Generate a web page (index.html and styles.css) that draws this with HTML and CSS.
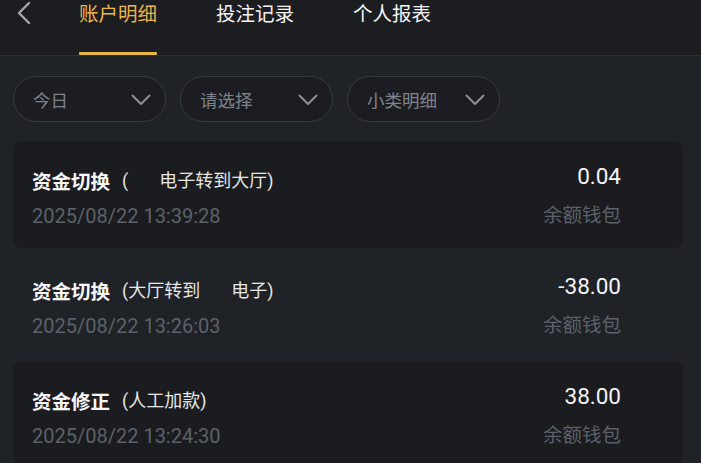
FILE: index.html
```html
<!DOCTYPE html>
<html lang="zh-CN">
<head>
<meta charset="utf-8">
<title>账户明细</title>
<link rel="stylesheet" href="styles.css">
</head>
<body>
<header class="topbar">
  <div class="back">
    <svg width="16" height="24" viewBox="0 0 16 24"><path d="M13 2 L3 12 L13 22" fill="none" stroke="#a3a6ab" stroke-width="2.4" stroke-linecap="round" stroke-linejoin="round"/></svg>
  </div>
  <nav class="tabs">
    <div class="tab active"><span class="tab-text">账户明细</span><span class="bar"></span></div>
    <div class="tab"><span class="tab-text">投注记录</span><span class="bar"></span></div>
    <div class="tab"><span class="tab-text">个人报表</span><span class="bar"></span></div>
  </nav>
</header>
<section class="filters">
  <div class="pill"><span>今日</span><svg width="20" height="12" viewBox="0 0 20 12"><path d="M1.5 1.5 L10 10 L18.5 1.5" fill="none" stroke="#8b9098" stroke-width="2" stroke-linecap="round" stroke-linejoin="round"/></svg></div>
  <div class="pill"><span>请选择</span><svg width="20" height="12" viewBox="0 0 20 12"><path d="M1.5 1.5 L10 10 L18.5 1.5" fill="none" stroke="#8b9098" stroke-width="2" stroke-linecap="round" stroke-linejoin="round"/></svg></div>
  <div class="pill"><span>小类明细</span><svg width="20" height="12" viewBox="0 0 20 12"><path d="M1.5 1.5 L10 10 L18.5 1.5" fill="none" stroke="#8b9098" stroke-width="2" stroke-linecap="round" stroke-linejoin="round"/></svg></div>
</section>
<main class="list">
  <div class="item card">
    <div class="left">
      <div class="title"><b>资金切换</b><span class="sub">(<span class="gap"></span>电子转到大厅)</span></div>
      <div class="date">2025/08/22 13:39:28</div>
    </div>
    <div class="right">
      <div class="amount">0.04</div>
      <div class="wallet">余额钱包</div>
    </div>
  </div>
  <div class="item">
    <div class="left">
      <div class="title"><b>资金切换</b><span class="sub">(大厅转到<span class="gap"></span>电子)</span></div>
      <div class="date">2025/08/22 13:26:03</div>
    </div>
    <div class="right">
      <div class="amount">-38.00</div>
      <div class="wallet">余额钱包</div>
    </div>
  </div>
  <div class="item card">
    <div class="left">
      <div class="title"><b>资金修正</b><span class="sub">(人工加款)</span></div>
      <div class="date">2025/08/22 13:24:30</div>
    </div>
    <div class="right">
      <div class="amount">38.00</div>
      <div class="wallet">余额钱包</div>
    </div>
  </div>
</main>
</body>
</html>
```
FILE: styles.css
```css
* { box-sizing: border-box; }
html, body { margin: 0; padding: 0; }
body {
  width: 701px;
  height: 463px;
  overflow: hidden;
  background: #1f2227;
  font-family: Roboto, "Noto Sans CJK SC", sans-serif;
  color: #f2f2f2;
}
.topbar {
  height: 56px;
  background: #1c1d21;
  border-bottom: 1px solid #2c3038;
  display: flex;
  align-items: flex-start;
}
.back {
  width: 79px;
  padding-left: 16px;
  height: 26px;
  display: flex;
  align-items: center;
}
.tabs {
  display: flex;
  gap: 59px;
}
.tab {
  height: 55px;
  display: flex;
  flex-direction: column;
  justify-content: space-between;
  align-items: stretch;
}
.tab-text {
  font-family: "Noto Sans CJK SC", sans-serif;
  font-size: 19.5px;
  line-height: 26px;
  color: #f4f4f4;
}
.tab .bar { height: 3px; border-radius: 1px; }
.tab.active .tab-text { color: #e9b54c; }
.tab.active .bar { background: #e8b443; }

.filters {
  display: flex;
  gap: 14px;
  padding: 20px 0 19px 13px;
}
.pill {
  width: 153px;
  height: 46px;
  border: 1px solid #363a43;
  border-radius: 23px;
  background: #1c1d22;
  display: flex;
  align-items: center;
  justify-content: space-between;
  padding: 0 14px 0 19px;
  font-family: "Noto Sans CJK SC", sans-serif;
  font-size: 17.5px;
  color: #7e848c;
}
.pill svg { margin-top: 1px; }

.list {
  padding-left: 13px;
  display: flex;
  flex-direction: column;
  gap: 3px;
}
.item {
  width: 670px;
  height: 107px;
  border-radius: 9px;
  display: flex;
  justify-content: space-between;
  padding: 22px 62px 0 19px;
}
.card { background: #1b1c20; }
.left { padding-top: 5px; }
.title {
  line-height: 26px;
  height: 26px;
  display: flex;
  align-items: center;
  white-space: nowrap;
}
.title b {
  font-family: "Noto Sans CJK SC", sans-serif;
  font-weight: 700;
  font-size: 19.5px;
  color: #f6f6f6;
  margin-right: 12px;
}
.sub {
  font-family: Roboto, "Noto Sans CJK SC", sans-serif;
  font-size: 18px;
  color: #e6e6e6;
}
.gap { display: inline-block; width: 31px; }
.date {
  margin-top: 9px;
  line-height: 26px;
  font-size: 20px;
  color: #5c6169;
}
.right {
  display: flex;
  flex-direction: column;
  align-items: flex-end;
}
.amount {
  line-height: 26px;
  font-size: 22.5px;
  color: #f4f4f4;
}
.wallet {
  margin-top: 12px;
  line-height: 26px;
  font-family: "Noto Sans CJK SC", sans-serif;
  font-size: 19.5px;
  color: #5c6169;
}
```
